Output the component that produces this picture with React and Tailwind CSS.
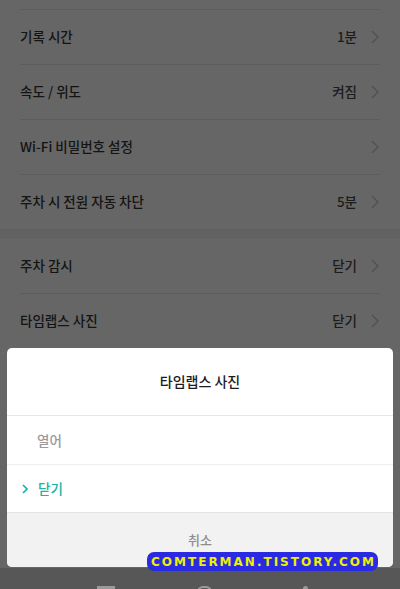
import React from "react";

const topRows = [
  { label: "기록 시간", value: "1분" },
  { label: "속도 / 위도", value: "켜짐" },
  { label: "Wi-Fi 비밀번호 설정", value: "" },
  { label: "주차 시 전원 자동 차단", value: "5분" },
];

const parkRows = [
  { label: "주차 감시", value: "닫기" },
  { label: "타임랩스 사진", value: "닫기" },
];

const Chevron = ({ className }) => (
  <svg width="8" height="14" viewBox="0 0 8 14" className={className}>
    <path d="M1 1 L7 7 L1 13" fill="none" stroke="currentColor" strokeWidth="1.2" />
  </svg>
);

const SettingRow = ({ label, value, first }) => (
  <div>
    {!first && <div className="mx-5 h-px bg-[#5c5c5c]" />}
    <div className="flex h-[54px] items-center justify-between pl-5 pr-[21px] pb-[1px]">
      <span className="text-[13.5px] font-medium text-[#141414]">{label}</span>
      <div className="flex items-center gap-[14px]">
        {value && <span className="text-[13.5px] font-medium text-[#1c1c1c]">{value}</span>}
        <Chevron className="text-[#505050]" />
      </div>
    </div>
  </div>
);

export default function App() {
  return (
    <div
      className="relative h-[589px] w-[400px] overflow-hidden bg-[#666666]"
      style={{ fontFamily: '"Noto Sans CJK KR", "Noto Sans", sans-serif' }}
    >
      <div className="h-[9px]" />
      <div className="mx-5 h-px bg-[#5c5c5c]" />
      {topRows.map((r, i) => (
        <SettingRow key={r.label} {...r} first={i === 0} />
      ))}

      <div className="h-[10px] bg-gradient-to-b from-[#606060] to-[#636363]" />

      {parkRows.map((r, i) => (
        <SettingRow key={r.label} {...r} first={i === 0} />
      ))}

      <div className="mx-[7px] overflow-hidden rounded-[5px] bg-white">
        <div className="flex h-[67px] items-center justify-center text-[14px] font-medium text-[#1c1c1c]">
          타임랩스 사진
        </div>
        <div className="h-px bg-[#e6e6e6]" />
        <div className="flex h-[48px] items-center pl-[30px] text-[13.5px] font-medium text-[#9a9a9a]">
          열어
        </div>
        <div className="h-px bg-[#eeeeee]" />
        <div className="flex h-[47px] items-center gap-[10px] pl-[15px] text-[13.5px] font-medium text-[#16b3a6]">
          <svg width="6" height="10" viewBox="0 0 6 10">
            <path d="M1 1 L5 5 L1 9" fill="none" stroke="currentColor" strokeWidth="1.6" />
          </svg>
          <span>닫기</span>
        </div>
        <div className="h-px bg-[#e2e2e2]" />
        <div className="flex h-[54px] items-start justify-center bg-[#f2f2f2] pt-[17px] text-[13px] font-medium text-[#8e8e8e]">
          취소
        </div>
      </div>

      <div className="mt-[1px] h-[21px] bg-[#575757] pt-[18px]">
        <div className="flex items-start">
          <div className="ml-[97px] h-[3px] w-[18px] bg-[#9a9a9a]" />
          <div className="ml-[82px] h-[6px] w-[15px] rounded-t-full border-2 border-b-0 border-[#9a9a9a]" />
          <div className="ml-[91px] h-[3px] w-[5px] rounded-t-sm bg-[#9a9a9a]" />
        </div>
      </div>

      <div className="absolute left-[147px] top-[552px] flex h-[19px] w-[231px] items-center justify-center rounded-[7px] bg-[#2a2ae2]">
        <span
          className="pl-[2px] text-[12px] font-bold tracking-[2px] text-[#eef000]"
          style={{ fontFamily: '"DejaVu Sans", sans-serif' }}
        >
          COMTERMAN.TISTORY.COM
        </span>
      </div>
    </div>
  );
}
